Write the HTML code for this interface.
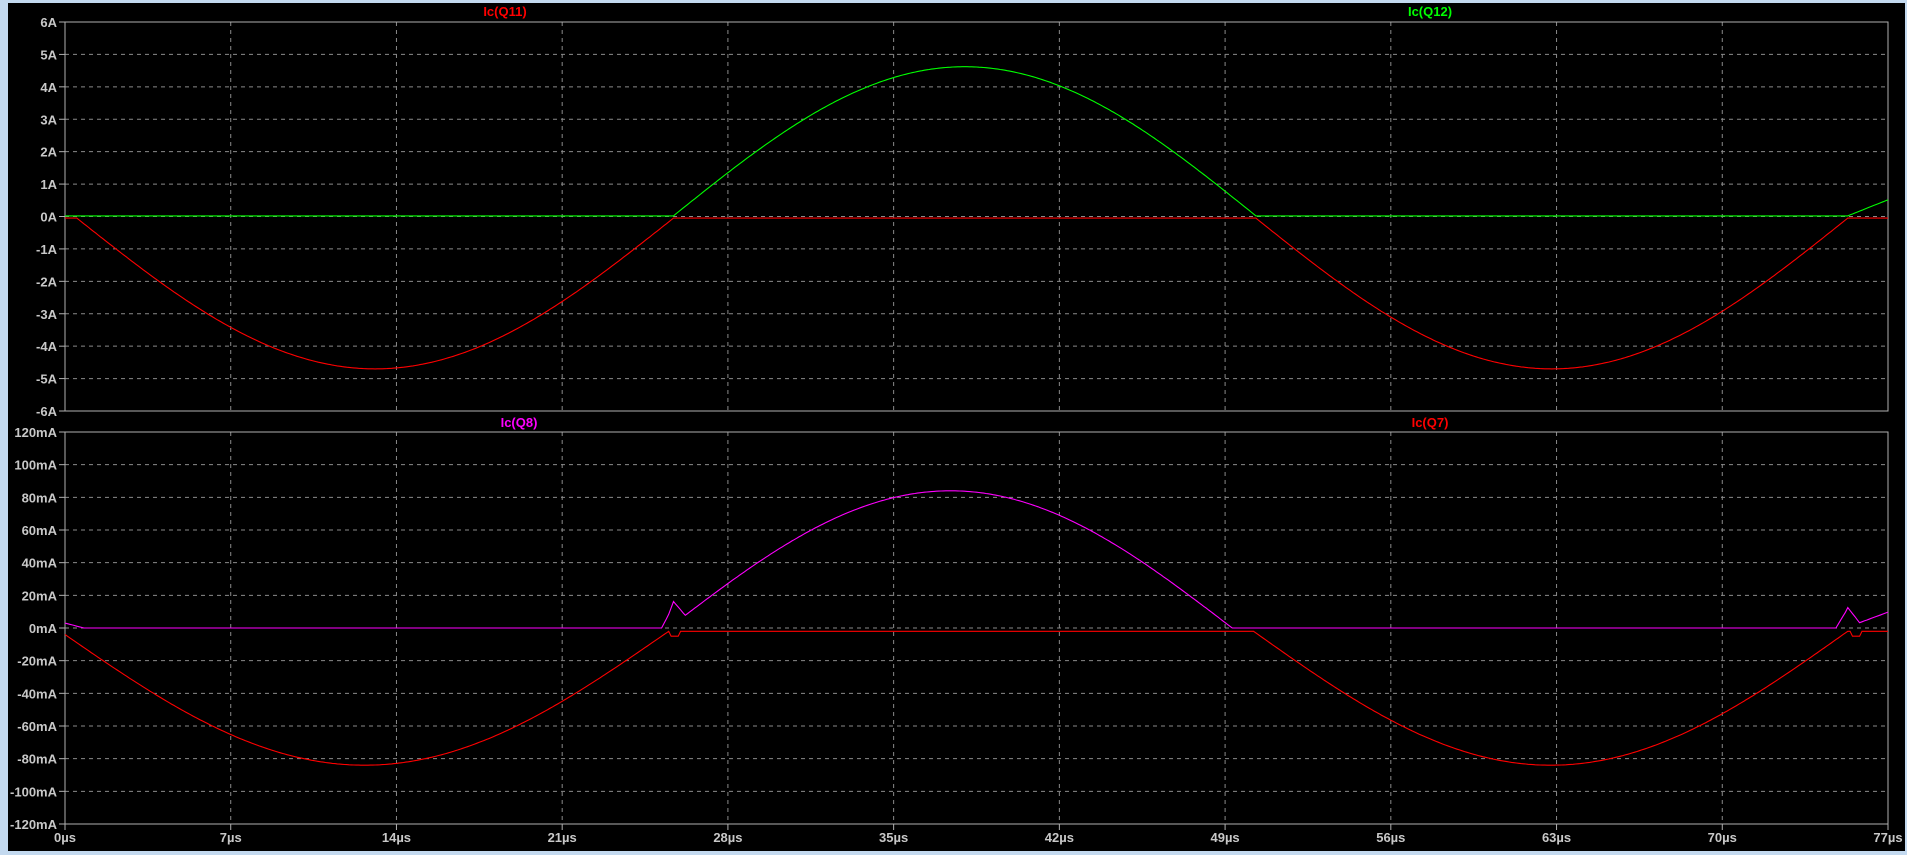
<!DOCTYPE html><html><head><style>
body{margin:0;background:#c3d9ef;width:1907px;height:855px;overflow:hidden}
svg{position:absolute;left:0;top:0}
text{font-family:"Liberation Sans",sans-serif;font-size:13px;fill:#c8c8c8;font-weight:bold}
</style></head><body>
<svg id="s" width="1907" height="855" xmlns="http://www.w3.org/2000/svg">
<rect x="0" y="0" width="1907" height="855" fill="#c3d9ef"/>
<rect x="8" y="3" width="1897" height="848" fill="#000"/>
<g id="g"></g>
</svg>
<script>
var g=document.getElementById('g'),h='';
var X0=65,X1=1888,T1=22,T2=411,B1=432,B2=824;
function X(t){return X0+t/77*(X1-X0)}
function TY(v){return (T1+T2)/2-v*(T2-T1)/12}
function BY(v){return (B1+B2)/2-v/20*(B2-B1)/12}
for(var i=0;i<=12;i++){
 var ya=T1+i*(T2-T1)/12,yb=B1+i*(B2-B1)/12;
 var d=(i==0||i==12)?'':'stroke-dasharray="4,4"';
 h+='<line x1="'+X0+'" y1="'+ya+'" x2="'+X1+'" y2="'+ya+'" stroke="#8a8a8a" '+d+'/>';
 h+='<line x1="'+X0+'" y1="'+yb+'" x2="'+X1+'" y2="'+yb+'" stroke="#8a8a8a" '+d+'/>';
 h+='<line x1="'+(X0-6)+'" y1="'+ya+'" x2="'+X0+'" y2="'+ya+'" stroke="#b0b0b0"/>';
 h+='<line x1="'+(X0-6)+'" y1="'+yb+'" x2="'+X0+'" y2="'+yb+'" stroke="#b0b0b0"/>';
 var va=6-i,vb=120-20*i;
 h+='<text x="57" y="'+(ya+5)+'" text-anchor="end">'+va+'A</text>';
 h+='<text x="57" y="'+(yb+5)+'" text-anchor="end">'+vb+'mA</text>';
}
for(var j=0;j<=11;j++){
 var x=X0+j*(X1-X0)/11,d=(j==0||j==11)?'':'stroke-dasharray="4,4"';
 h+='<line x1="'+x+'" y1="'+T1+'" x2="'+x+'" y2="'+T2+'" stroke="#8a8a8a" '+d+'/>';
 h+='<line x1="'+x+'" y1="'+B1+'" x2="'+x+'" y2="'+B2+'" stroke="#8a8a8a" '+d+'/>';
 h+='<line x1="'+x+'" y1="'+B2+'" x2="'+x+'" y2="'+(B2+6)+'" stroke="#b0b0b0"/>';
 h+='<text x="'+x+'" y="'+(B2+18)+'" text-anchor="middle">'+(7*j)+'µs</text>';
}
h+='<rect x="'+X0+'" y="'+T1+'" width="'+(X1-X0)+'" height="'+(T2-T1)+'" fill="none" stroke="#b0b0b0"/>';
h+='<rect x="'+X0+'" y="'+B1+'" width="'+(X1-X0)+'" height="'+(B2-B1)+'" fill="none" stroke="#b0b0b0"/>';
function path(f,Y,c){var p='';for(var t=0;t<=77;t+=0.1){p+=(p?'L':'M')+X(t).toFixed(1)+','+Y(f(t)).toFixed(1)}
 return '<path d="'+p+'" fill="none" stroke="'+c+'" stroke-width="1.1"/>'}
function lobe(t,a,b,A){if(t<a||t>b)return 0;return A*Math.sin(Math.PI*(t-a)/(b-a))}
var r1=function(t){return -0.05+lobe(t,0.5,25.7,-4.65)+lobe(t,50.3,75.3,-4.65)};
var g1=function(t){return 0.02+lobe(t,25.7,50.3,4.6)+lobe(t,75.3,124.8,4.6)};
var r2=function(t){return -2+lobe(t,-0.2,25.5,-82)+lobe(t,50.2,75.3,-82)+(Math.abs(t-25.8)<0.2?-3:0)+(Math.abs(t-75.6)<0.2?-3:0)};
var m2=function(t){var v=lobe(t,25.5,49.3,84)+lobe(t,75.2,124,84);
 if(t>25.3&&t<26.2)v+=14*Math.max(0,1-Math.abs(t-25.7)/0.5);
 if(t>74.9&&t<75.8)v+=12*Math.max(0,1-Math.abs(t-75.3)/0.5);
 if(t<0.8)v+=3*(1-t/0.8);return v};
h+=path(r1,TY,'#ff0000')+path(g1,TY,'#00ff00')+path(r2,BY,'#ff0000')+path(m2,BY,'#ff00ff');
h+='<text x="505" y="16" text-anchor="middle" style="fill:#ff0000">Ic(Q11)</text>';
h+='<text x="1430" y="16" text-anchor="middle" style="fill:#00ff00">Ic(Q12)</text>';
h+='<text x="519" y="427" text-anchor="middle" style="fill:#ff00ff">Ic(Q8)</text>';
h+='<text x="1430" y="427" text-anchor="middle" style="fill:#ff0000">Ic(Q7)</text>';
g.innerHTML=h;
</script>
</body></html>
